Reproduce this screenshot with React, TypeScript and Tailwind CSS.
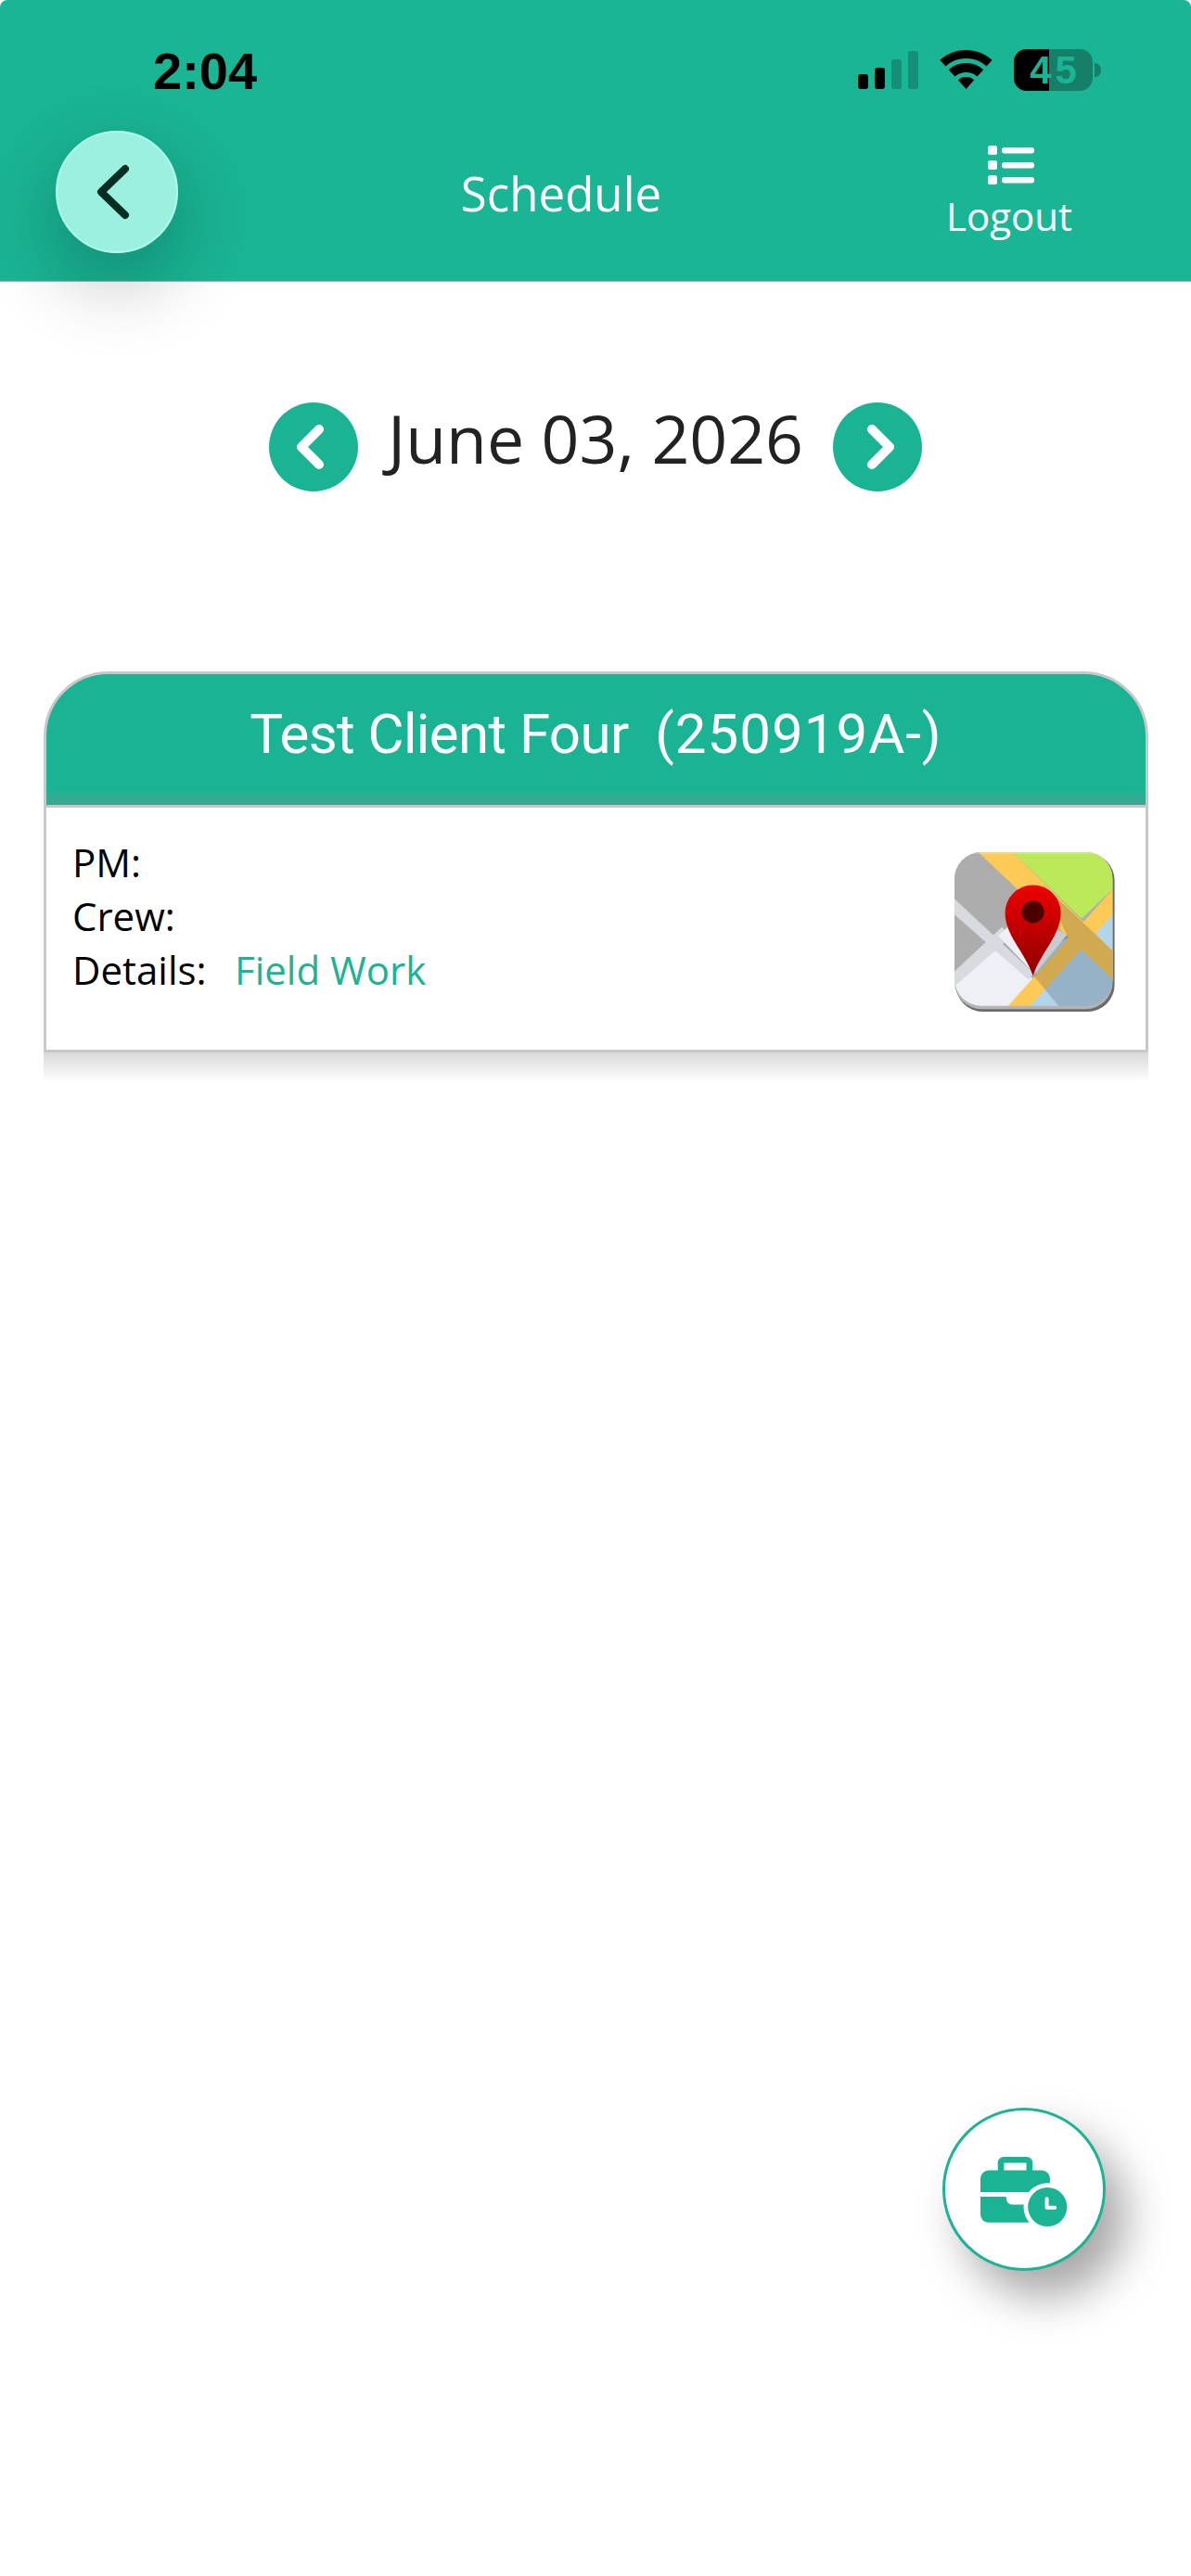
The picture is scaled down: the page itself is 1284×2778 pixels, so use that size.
import React from 'react'

const teal = '#1ab394'

const StatusBar = () => (
  <div className="flex h-[130px] items-start pl-[165px] pt-[53px]">
    <span className="text-[56px] font-bold leading-[48px] text-black font-['Liberation_Sans',sans-serif]">2:04</span>
    <div className="ml-auto mr-[97px] flex items-start">
      <div className="mt-[2px] flex h-[41px] items-end gap-[7px]">
        <div className="h-[16px] w-[11px] rounded-[3px] bg-black" />
        <div className="h-[23px] w-[11px] rounded-[3px] bg-black" />
        <div className="h-[32px] w-[11px] rounded-[3px] bg-[#158f76]" />
        <div className="h-[41px] w-[11px] rounded-[3px] bg-[#158f76]" />
      </div>
      <svg className="ml-[23px] mt-[1px]" width="57" height="42" viewBox="0 0 57 42">
        <path d="M3.4 14.1A37.5 37.5 0 0 1 53.6 14.1" fill="none" stroke="#000" strokeWidth="9" />
        <path d="M13.1 24.9A23 23 0 0 1 43.9 24.9" fill="none" stroke="#000" strokeWidth="10" />
        <path d="M28.5 42L19.8 32.3A13 13 0 0 1 37.2 32.3Z" fill="#000" />
      </svg>
      <div className="relative ml-[23px] flex h-[45px] w-[85px] overflow-hidden rounded-[14px] bg-[#167f69]">
        <div className="h-full w-[38px] bg-black" />
        <span className="absolute inset-0 flex items-center justify-center pl-[4px] text-[42px] font-bold tracking-[4px] text-[#1ab394] font-['Liberation_Sans',sans-serif]">45</span>
      </div>
      <div className="ml-[2px] mt-[15px] h-[15px] w-[7px] rounded-r-full bg-[#167f69]" />
    </div>
  </div>
)

const NavBar = () => (
  <div className="flex items-start justify-between pl-[60px] pr-[128px]">
    <button className="mt-[11px] flex h-[132px] w-[132px] items-center justify-center rounded-full border-2 border-[#aefff0] bg-[#9cf0df] shadow-[0_30px_80px_10px_rgba(0,0,0,0.2)]">
      <svg className="mr-[10px]" width="40" height="62" viewBox="0 0 40 62" fill="none">
        <path d="M34 6L8 31L34 56" stroke="#032e22" strokeWidth="8" strokeLinecap="round" strokeLinejoin="round" />
      </svg>
    </button>
    <span className="mt-[48px] -translate-x-[3px] text-[51px] leading-[60px] text-white">Schedule</span>
    <div className="mt-[27px] flex w-[132px] flex-col items-center">
      <svg width="50" height="42" viewBox="0 0 50 42" fill="#fff">
        <rect x="0" y="0" width="10" height="10" rx="2.5" />
        <rect x="0" y="16" width="10" height="10" rx="2.5" />
        <rect x="0" y="32" width="10" height="10" rx="2.5" />
        <rect x="15" y="2" width="35" height="6.5" rx="3" />
        <rect x="15" y="18" width="35" height="6.5" rx="3" />
        <rect x="15" y="34" width="35" height="6.5" rx="3" />
      </svg>
      <span className="mt-[8px] -translate-x-[2px] text-[42px] leading-[52px] text-white">Logout</span>
    </div>
  </div>
)

const Arrow = ({ dir }: { dir: 'left' | 'right' }) => (
  <button className="flex h-[96px] w-[96px] items-center justify-center rounded-full bg-[#1ab394]">
    <svg width="44" height="60" viewBox="0 0 44 60" fill="none">
      <path
        d={dir === 'left' ? 'M28 11L9 30L28 49' : 'M16 11L35 30L16 49'}
        stroke="#fff"
        strokeWidth="10"
        strokeLinecap="round"
        strokeLinejoin="round"
      />
    </svg>
  </button>
)

const MapIcon = () => (
  <svg width="176" height="176" viewBox="150 88 516 516">
    <defs>
      <clipPath id="mapClip">
        <rect x="150" y="88" width="500" height="486" rx="85" />
      </clipPath>
      <linearGradient id="pinFill" x1="0" y1="0" x2="0" y2="1">
        <stop offset="0" stopColor="#ee0000" />
        <stop offset="1" stopColor="#8f0000" />
      </linearGradient>
    </defs>
    <rect x="154" y="92" width="502" height="500" rx="85" fill="#6b6b6b" />
    <rect x="150" y="88" width="500" height="496" rx="85" fill="#b4b4b6" />
    <g clipPath="url(#mapClip)">
      <rect x="150" y="88" width="500" height="500" fill="#adadad" />
      <polygon points="335,88 650,88 650,205 552,298" fill="#bbe95a" />
      <polygon points="430,400 650,285 650,600 370,600" fill="#b3d5ea" />
      <polygon points="265,378 400,490 300,600 150,600 150,490" fill="#eef0f5" />
      <polygon points="150,235 400,470 385,492 150,285" fill="#d8dae0" />
      <polygon points="150,465 300,325 330,355 150,512" fill="#d8dae0" />
      <polygon points="288,352 340,305 430,370 400,470" fill="#eef0f5" />
      <polygon points="225,88 335,88 650,400 650,490 545,390" fill="#fdca58" />
      <polygon points="305,590 650,205 650,285 375,590" fill="#fdca58" />
      <polygon points="420,300 505,350 405,475" fill="#c9cbd0" />
      <polygon points="430,190 650,400 650,600 500,600 400,478 505,350" fill="#1f2a35" opacity="0.2" />
      <rect x="150" y="88" width="500" height="6" fill="#fff" opacity="0.2" />
    </g>
    <path d="M398 478C370 400 310 350 310 280A88 88 0 0 1 486 280C486 350 426 400 398 478Z" fill="url(#pinFill)" />
    <circle cx="398" cy="277" r="35" fill="#4d0000" />
  </svg>
)

const ClientCard = () => (
  <div className="mx-[47px] mt-[194px] w-[1191px]">
    <div className="h-[147px] overflow-hidden rounded-t-[70px] border-[3px] border-[#c8c8c8] bg-gradient-to-b from-[#1ab394] from-[88%] to-[#40a48f] pt-[30px] text-center">
      <span className="whitespace-pre text-[60px] leading-[70px] text-white font-['Roboto',sans-serif]">
        <span className="tracking-[-0.6px]">Test Client Four  </span>
        <span className="tracking-[1px]">(250919A-)</span>
      </span>
    </div>
    <div className="flex h-[264px] items-start justify-between border-[3px] border-t-0 border-[#c8c8c8] bg-white pl-[28px] pr-[30px]">
      <div className="mt-[30px] text-[42px] leading-[58px] text-black">
        <div>PM:</div>
        <div>Crew:</div>
        <div className="flex">
          <span className="w-[175px]">Details:</span>
          <span className="text-[#1ab394]">Field Work</span>
        </div>
      </div>
      <div className="mt-[48px]">
        <MapIcon />
      </div>
    </div>
    <div className="h-[32px] bg-gradient-to-b from-black/15 to-transparent" />
  </div>
)

const JobFab = () => (
  <button className="absolute left-[1016px] top-[2273px] flex h-[176px] w-[176px] items-center justify-center rounded-full border-[3px] border-[#1ab394] bg-white shadow-[22px_28px_48px_rgba(0,0,0,0.35)]">
    <svg className="mt-[6px]" width="102" height="84" viewBox="220 240 305 250">
      <path d="M298 298V270a9 9 0 0 1 9-9h74a9 9 0 0 1 9 9v28" fill="none" stroke={teal} strokeWidth="20" />
      <rect x="232" y="295" width="224" height="168" rx="26" fill={teal} />
      <rect x="225" y="365" width="240" height="15" fill="#fff" />
      <path d="M315 372v14a19 19 0 0 0 19 19h70v-33z" fill="#fff" />
      <circle cx="448" cy="413" r="77" fill="#fff" />
      <circle cx="448" cy="413" r="63" fill={teal} />
      <path d="M446 387V415H472" fill="none" stroke="#fff" strokeWidth="12" strokeLinecap="round" strokeLinejoin="round" />
    </svg>
  </button>
)

export default function App() {
  return (
    <div className="relative h-[2778px] w-[1284px] overflow-hidden bg-white font-['Open_Sans',sans-serif]">
      <header className="relative h-[304px] rounded-t-[8px] border-b border-[#b5b5b5] bg-[#19b594]">
        <StatusBar />
        <NavBar />
      </header>

      <div className="mt-[130px] flex items-center justify-center gap-[32px]">
        <Arrow dir="left" />
        <span className="w-[448px] -translate-y-[9px] whitespace-nowrap text-center text-[71.5px] leading-[96px] text-[#222]">June 03, 2026</span>
        <Arrow dir="right" />
      </div>

      <ClientCard />
      <JobFab />
    </div>
  )
}
